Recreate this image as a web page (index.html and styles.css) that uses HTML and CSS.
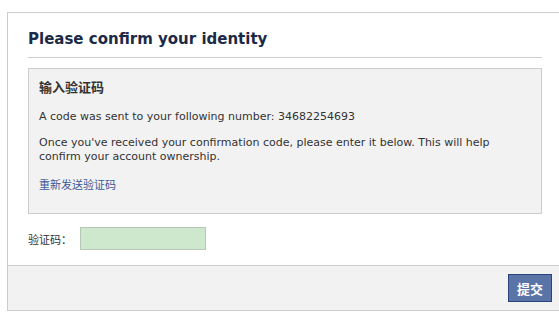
FILE: index.html
```
<!DOCTYPE html>
<html lang="zh-CN">
<head>
    <meta charset="UTF-8">
    <title>Please confirm your identity</title>
    <link rel="stylesheet" href="styles.css">
</head>
<body>
    <div class="dialog">
        <div class="dialog-body">
            <h2 class="dialog-title">Please confirm your identity</h2>
            <div class="info-box">
                <h3>输入验证码</h3>
                <p>A code was sent to your following number: 34682254693</p>
                <p>Once you've received your confirmation code, please enter it below. This will help confirm your account ownership.</p>
                <a href="#" class="resend">重新发送验证码</a>
            </div>
            <div class="code-row">
                <label for="code">验证码：</label>
                <input type="text" id="code" class="code-input">
            </div>
        </div>
        <div class="dialog-footer">
            <button class="btn-submit">提交</button>
        </div>
    </div>
</body>
</html>
```

FILE: styles.css
```
body { margin: 0; padding: 12px 0 0 7px; font-family: "DejaVu Sans", "Noto Sans CJK SC", sans-serif; font-size: 11px; color: #333; background: #fff; }
.dialog { width: 554px; border: 1px solid #ccc; background: #fff; }
.dialog-body { padding: 18px 20px 15px 20px; }
.dialog-title { margin: 0; padding-bottom: 9px; border-bottom: 1px solid #ccc; font-size: 15px; line-height: 17px; color: #1c2a47; }
.info-box { margin-top: 10px; padding: 8px 10px 21px 10px; background: #f2f2f2; border: 1px solid #ccc; }
.info-box h3 { margin: 0 0 14px 0; font-size: 13px; color: #333; font-family: "Noto Sans CJK SC", sans-serif; }
.info-box p { margin: 0 0 12px 0; line-height: 14px; }
.resend { color: #3b5998; text-decoration: none; font-family: "Noto Sans CJK SC", sans-serif; }
.code-row { display: flex; align-items: center; margin-top: 13px; }
.code-row label { width: 52px; font-family: "Noto Sans CJK SC", sans-serif; }
.code-input { width: 126px; height: 23px; padding: 0; margin: 0; border: 1px solid #b7c7b7; background: #cde8cd; box-sizing: border-box; }
.dialog-footer { display: flex; justify-content: flex-end; padding: 8px 10px; background: #f2f2f2; border-top: 1px solid #ccc; }
.btn-submit { width: 44px; height: 28px; padding: 0; background: #5b74a8; border: 1px solid #29447e; color: #fff; font-weight: bold; font-size: 13px; font-family: "Noto Sans CJK SC", sans-serif; }
```
